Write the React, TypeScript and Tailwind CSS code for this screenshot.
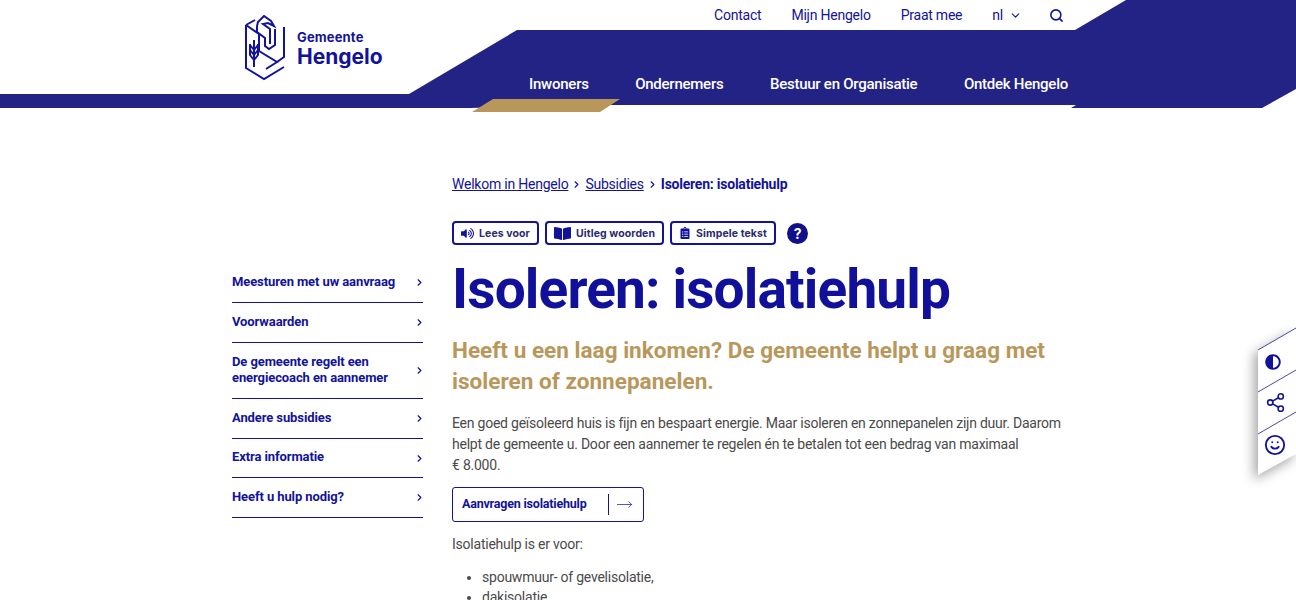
import { ChevronDown, ChevronRight, MoveRight, Search, Share2, Smile } from "lucide-react";
import { FaAdjust, FaBookOpen, FaClipboardList, FaVolumeUp } from "react-icons/fa";

const side = [
  { label: ["Meesturen met uw aanvraag"], h: "h-[40px]" },
  { label: ["Voorwaarden"], h: "h-[40px]" },
  { label: ["De gemeente regelt een", "energiecoach en aannemer"], h: "h-[56px]" },
  { label: ["Andere subsidies"], h: "h-[40px]" },
  { label: ["Extra informatie"], h: "h-[39px]" },
  { label: ["Heeft u hulp nodig?"], h: "h-[40px]" },
];

function Logo() {
  return (
    <svg width="42" height="66" viewBox="0 0 42 66" fill="none" stroke="#12129a" strokeWidth="2" className="shrink-0">
      <path d="M1 10 L1 53 L19 64 L39 52" />
      <path d="M1 10 L10 5 M1 10 L14 19 L14 36 L32 47 L21 54" />
      <path d="M39 12 L39 42 L32 47" />
      <path d="M30 14 L30 30 L24 34 L20 31 L20 23 L12 17 L12 11" />
      <path d="M12 11 L13 7 L19 1 L26 6 L29 11 L23 8 L18 9 L25 14 L25 29" />
      <path d="M9 25 L9 52 M5 29 L5 40 L9 45 L13 40 L13 29 M5 35 L9 40 L13 35 M5 30 L9 35 L13 30" />
    </svg>
  );
}

function Btn({ icon, text }: { icon: React.ReactNode; text: string }) {
  return (
    <button className="flex h-[24px] items-center gap-[5px] rounded-[4px] border-2 border-[#12129a] bg-white px-[7px] text-[10.5px] font-bold tracking-[0.1px] text-[#2a2a6e]">
      {icon}
      <span className="pt-[1px]">{text}</span>
    </button>
  );
}

export default function App() {
  return (
    <div className="relative h-[600px] w-full overflow-hidden bg-white font-['Roboto',sans-serif] text-[14px] tracking-[-0.23px] text-[#4a4a4a]">
      <header className="relative h-[112px]">
        <svg className="absolute inset-0" width="1296" height="112" viewBox="0 0 1296 112">
          <polygon points="0,94 409,94 517,30 1075,30 1126,0 1296,0 1296,89 1262,108 1071,108 1076,105 600,105 470,108 0,108" fill="#232386" />
          <polygon points="493,99 620,99 600,112 472,112" fill="#b9975b" />
        </svg>
        <div className="relative mx-auto flex h-full w-[832px] flex-col">
          <div className="flex h-[30px] items-center justify-end gap-[30px] text-[#12129a]">
            <span>Contact</span>
            <span>Mijn Hengelo</span>
            <span>Praat mee</span>
            <span className="flex items-center gap-[6px]">
              nl <ChevronDown size={13} strokeWidth={2} className="mr-[-3px]" />
            </span>
            <Search size={15} strokeWidth={2.5} />
          </div>
          <nav className="mr-[-4px] mt-[43px] flex justify-end gap-[46.5px] text-[15px] font-medium tracking-[-0.25px] text-white">
            <span>Inwoners</span>
            <span>Ondernemers</span>
            <span>Bestuur en Organisatie</span>
            <span>Ontdek Hengelo</span>
          </nav>
          <div className="absolute left-[13px] top-[15px] flex items-center gap-[10px]">
            <Logo />
            <div className="pt-[1px] font-['Inter',sans-serif] font-bold leading-none tracking-normal text-[#12129a]">
              <div className="text-[13px] tracking-[0.15px]">Gemeente</div>
              <div className="mt-[2px] text-[21px]">Hengelo</div>
            </div>
          </div>
        </div>
      </header>

      <div className="mx-auto flex w-[832px] gap-[29px]">
        <aside className="w-[191px] shrink-0 pt-[151px]">
          {side.map((s) => (
            <div key={s.label[0]} className={`flex ${s.h} items-center justify-between border-b border-[#12129a] text-[13px] font-bold leading-[16px] tracking-[-0.1px] text-[#12129a]`}>
              <div className="pb-[2px]">
                {s.label.map((l) => (
                  <div key={l}>{l}</div>
                ))}
              </div>
              <ChevronRight size={11} strokeWidth={2.5} className="mr-[-2px]" />
            </div>
          ))}
        </aside>

        <main className="w-[612px] pt-[62px]">
          <div className="flex h-[20px] items-center text-[#12129a]">
            <span className="underline">Welkom in Hengelo</span>
            <ChevronRight size={11} strokeWidth={2.5} className="mx-[3px]" />
            <span className="underline">Subsidies</span>
            <ChevronRight size={11} strokeWidth={2.5} className="mx-[3px]" />
            <span className="font-bold">Isoleren: isolatiehulp</span>
          </div>
          <div className="mt-[27px] flex items-center gap-[6px] font-['Inter',sans-serif]">
            <Btn icon={<FaVolumeUp size={13} className="text-[#12129a]" />} text="Lees voor" />
            <Btn icon={<FaBookOpen size={17} className="text-[#12129a]" />} text="Uitleg woorden" />
            <Btn icon={<FaClipboardList size={12} className="text-[#12129a]" />} text="Simpele tekst" />
            <span className="ml-[5px] flex h-[21px] w-[21px] items-center justify-center rounded-full bg-[#10108c] text-[14px] font-bold text-white">?</span>
          </div>
          <h1 className="mt-[11px] h-[66px] text-[55px] font-bold leading-[66px] tracking-[-0.85px] text-[#10109a]">Isoleren: isolatiehulp</h1>
          <h2 className="mt-[13px] text-[22.5px] font-bold leading-[31px] tracking-[0.03px] text-[#b9975b]">
            Heeft u een laag inkomen? De gemeente helpt u graag met isoleren of zonnepanelen.
          </h2>
          <p className="mt-[16px] leading-[21px]">
            Een goed geïsoleerd huis is fijn en bespaart energie. Maar isoleren en zonnepanelen zijn duur. Daarom helpt de gemeente u. Door een aannemer te regelen én te betalen tot een bedrag van maximaal €&nbsp;8.000.
          </p>
          <a className="mt-[11px] flex h-[35px] w-[192px] items-center justify-between rounded-[3px] border border-[#12129a] pl-[9px] pr-[10px] text-[12.5px] font-bold tracking-[-0.2px] text-[#12129a]">
            Aanvragen isolatiehulp
            <span className="flex h-[21px] items-center gap-[8px] border-l border-[#12129a] pl-[7px]">
              <MoveRight size={17} strokeWidth={1} />
            </span>
          </a>
          <p className="mt-[12px] leading-[21px]">Isolatiehulp is er voor:</p>
          <ul className="mt-[12px] list-disc pl-[30px] leading-[20px]">
            <li>spouwmuur- of gevelisolatie,</li>
            <li>dakisolatie</li>
          </ul>
        </main>
      </div>

      <div className="absolute right-0 top-[326px] h-[150px] w-[38px] text-[#12129a] drop-shadow-[-4px_5px_6px_rgba(0,0,0,0.35)]">
        <svg className="absolute inset-0" width="38" height="150" viewBox="0 0 38 150" fill="white" stroke="#4a4aa8">
          <polygon points="0,24 38,2 38,128 0,149" stroke="none" />
          <path d="M0,24 L38,2 M0,66 L38,44 M0,108 L38,86" fill="none" />
        </svg>
        <div className="relative flex h-full flex-col items-center pr-[4px] pt-[28px]">
          <FaAdjust size={16} className="mr-[4px]" />
          <Share2 size={21} strokeWidth={1.8} className="mt-[22px]" />
          <Smile size={22} strokeWidth={2} className="mt-[21px]" />
        </div>
      </div>
    </div>
  );
}
